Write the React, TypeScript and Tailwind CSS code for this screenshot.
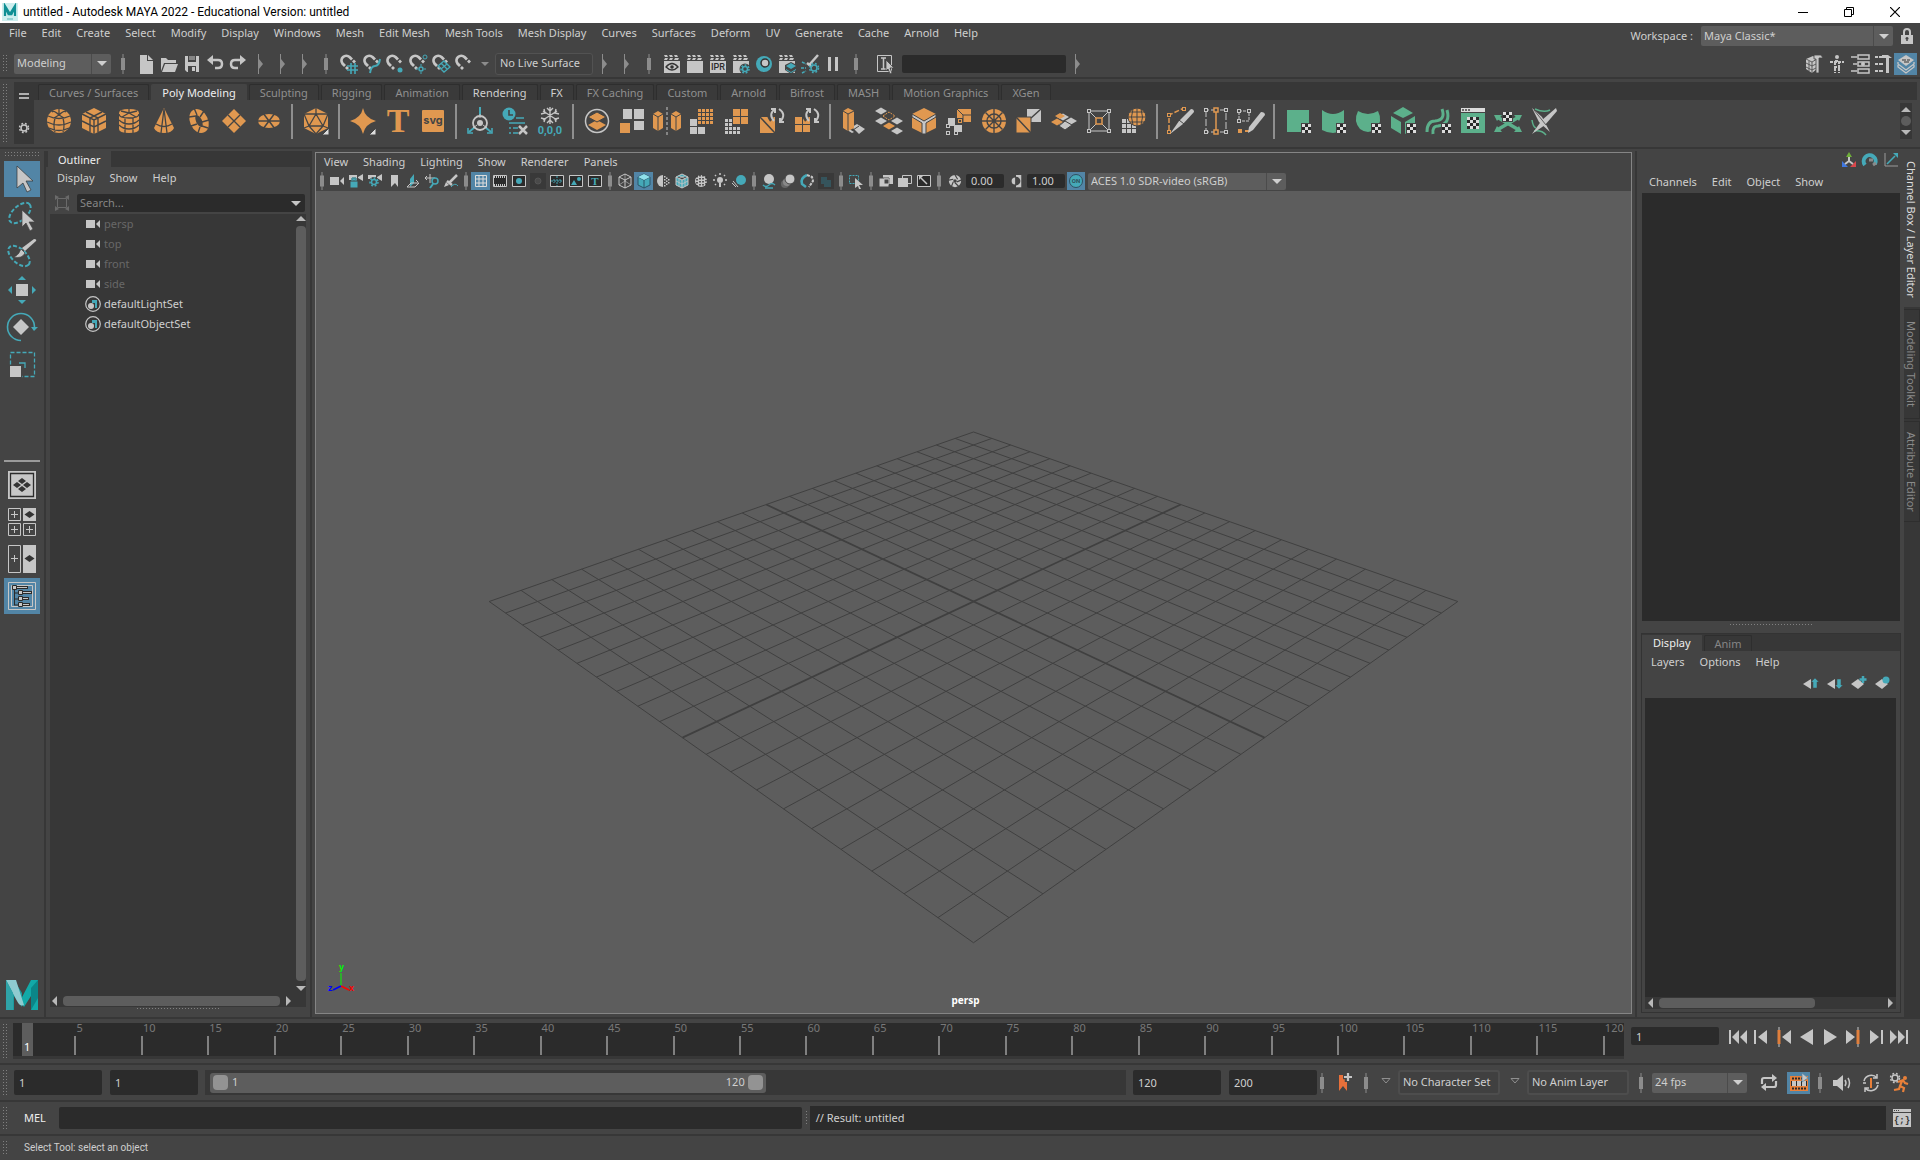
import { ReactNode } from 'react';
import clsx from 'clsx';

const G = '#c6c6c6';
const O = '#e09850';
const T = '#45a9b8';
const GR = '#5cb08b';
const D = '#444444';

const menus = [
  'File', 'Edit', 'Create', 'Select', 'Modify', 'Display', 'Windows', 'Mesh', 'Edit Mesh', 'Mesh Tools',
  'Mesh Display', 'Curves', 'Surfaces', 'Deform', 'UV', 'Generate', 'Cache', 'Arnold', 'Help',
];

const shelfTabs = [
  'Curves / Surfaces', 'Poly Modeling', 'Sculpting', 'Rigging', 'Animation', 'Rendering', 'FX', 'FX Caching',
  'Custom', 'Arnold', 'Bifrost', 'MASH', 'Motion Graphics', 'XGen',
];

/* ---------- shared drawing pieces ---------- */

const Checker = ({ x, y, s = 3 }: { x: number; y: number; s?: number }) => (
  <g>
    <rect x={x - 1} y={y - 1} width={s * 3 + 2} height={s * 3 + 2} fill={D} />
    <rect x={x} y={y} width={s * 3} height={s * 3} fill="#dcdcdc" />
    {[[1, 0], [0, 1], [2, 1], [1, 2]].map(([i, j]) => (
      <rect key={`${i}${j}`} x={x + i * s} y={y + j * s} width={s} height={s} fill="#2b2b2b" />
    ))}
  </g>
);

const Cells = ({ x, y, n, s, fill }: { x: number; y: number; n: number; s: number; fill: string }) => (
  <g fill={fill}>
    {Array.from({ length: n * n }, (_, k) => (
      <rect key={k} x={x + (k % n) * (s + 1)} y={y + Math.floor(k / n) * (s + 1)} width={s} height={s} />
    ))}
  </g>
);

const Clapper = ({ children }: { children?: ReactNode }) => (
  <>
    <path d="M2 1h3l1 2H3zM7 1h3l1 2H8zM12 1h3l1 2h-3zM3 4h3L5 6H2zM8 4h3l-1 2H7zM13 4h4l-1 2h-4z" fill={G} />
    <path d="M2 7h16v12H2z" fill={G} />
    {children}
  </>
);

const Magnet = ({ children }: { children?: ReactNode }) => (
  <>
    <path d="M6 12L3.500 9.500A4.800 4.800 0 0 1 10.500 3L13 5.500" fill="none" stroke={G} strokeWidth="2.800" />
    <path d="M7 13l2 2M14 6.500l2 2" stroke={G} strokeWidth="2.800" />
    {children}
  </>
);

const Diamond = ({ x, y, fill, r = 6 }: { x: number; y: number; fill: string; r?: number }) => (
  <path d={`M${x - r} ${y}l${r} ${-r * 0.6}l${r} ${r * 0.6}l${-r} ${r * 0.6}z`} fill={fill} />
);

const Node = ({ x, y, c = G }: { x: number; y: number; c?: string }) => (
  <rect x={x - 1.5} y={y - 1.5} width="3" height="3" fill={D} stroke={c} />
);

const gear = (x: number, y: number, c: string, r = 3) => (
  <g fill="none" stroke={c}>
    <circle cx={x} cy={y} r={r} strokeWidth="1.5" />
    <circle cx={x} cy={y} r={r + 1.5} strokeWidth="1.5" strokeDasharray="1.8 1.8" />
  </g>
);

/* ---------- shelf icons, 30 x 30 ---------- */

const shelfGroups: { name: string; art: ReactNode; more?: boolean }[][] = [
  [
    {
      name: 'Polygon Sphere',
      art: (
        <>
          <circle cx="15" cy="15" r="12" fill={O} />
          <path d="M15 3v7M4 10q11 5 22 0M3 16q12 6 24 0M5 22q10 5 20 0M11 12q-2 8 0 14M19 12q2 8 0 14M15 9Q10 4 8 6M15 9q5-5 7-3M15 9l-5 3M15 9l5 3" fill="none" stroke={D} strokeWidth="1.3" />
        </>
      ),
    },
    {
      name: 'Polygon Cube',
      art: (
        <>
          <path d="M15 2l12 6v14l-12 6-12-6V8z" fill={O} />
          <path d="M3 8l12 6 12-6M15 14v14M7 6l12 6v14M23 6L11 12v14M3 15l12 6 12-6" fill="none" stroke={D} strokeWidth="1.4" />
        </>
      ),
    },
    {
      name: 'Polygon Cylinder',
      art: (
        <>
          <path d="M5 7q0-4 10-4t10 4v16q0 4-10 4T5 23z" fill={O} />
          <path d="M5 8q0 4 10 4t10-4M15 3v4M15 7L7 5M15 7l8-2M15 7l-7 4M15 7l7 4M5 14q4 4 10 4t10-4M5 19q4 4 10 4t10-4M11 12v15M19 12v15" fill="none" stroke={D} strokeWidth="1.3" />
        </>
      ),
    },
    {
      name: 'Polygon Cone',
      art: (
        <>
          <path d="M15 2l10 20q-2 5-10 5t-10-5z" fill={O} />
          <path d="M15 3l-3 24M15 3l3 24M7 18q8 5 16 0" fill="none" stroke={D} strokeWidth="1.3" />
        </>
      ),
    },
    {
      name: 'Polygon Torus',
      art: (
        <>
          <ellipse cx="15" cy="15" rx="6" ry="9.500" transform="rotate(-25 15 15)" fill="none" stroke={O} strokeWidth="6" />
          <path d="M5 11l7-1M10 2l3 7M20 5l-4 6M25 14l-7 2M24 22l-6-2M14 27l2-6M7 20l6-2" fill="none" stroke={D} strokeWidth="1.4" />
        </>
      ),
    },
    {
      name: 'Polygon Plane',
      art: (
        <>
          <path d="M15 3l12 12-12 12L3 15z" fill={O} />
          <path d="M9 9l12 12M21 9L9 21" stroke={D} strokeWidth="1.4" />
        </>
      ),
    },
    {
      name: 'Polygon Disc',
      art: (
        <>
          <ellipse cx="15" cy="15" rx="11" ry="7" fill={O} />
          <path d="M4 15h22M9 7l12 16M21 7L9 23" stroke={D} strokeWidth="1.5" />
        </>
      ),
    },
  ],
  [
    {
      name: 'Platonic Solid',
      more: true,
      art: (
        <>
          <path d="M15 2l12 6v14l-12 6-12-6V8z" fill={O} />
          <path d="M15 8l7 12H8zM15 2v6M3 8l12 0M27 8H15M3 8l5 12M27 8l-5 12M8 20l-5 2M22 20l5 2M8 20l7 8 7-8" fill="none" stroke={D} strokeWidth="1.3" />
        </>
      ),
    },
  ],
  [
    { name: 'Super Shapes', more: true, art: <path d="M15 2q2 10 13 13-11 3-13 13-2-10-13-13Q13 12 15 2z" fill={O} /> },
    {
      name: 'Type',
      art: (
        <text x="15" y="26" textAnchor="middle" fontFamily="Liberation Serif, serif" fontWeight="700" fontSize="34" fill={O}>
          T
        </text>
      ),
    },
    {
      name: 'SVG',
      art: (
        <>
          <rect x="4" y="4" width="22" height="22" rx="1" fill={O} />
          <text x="15" y="18" textAnchor="middle" fontFamily="Inter, sans-serif" fontWeight="700" fontSize="11" fill={D}>
            svg
          </text>
        </>
      ),
    },
  ],
  [
    {
      name: 'Center Pivot',
      art: (
        <g fill="none">
          <path d="M15 1v8M4 26l6-5M26 26l-6-5" stroke={T} strokeWidth="2" />
          <path d="M3 22v5h5M27 22v5h-5" stroke={T} strokeWidth="1.600" />
          <circle cx="15" cy="17" r="7" stroke={G} strokeWidth="1.800" />
          <circle cx="15" cy="17" r="3" fill={G} />
          <path d="M15 8v4M8 22l4-3M22 22l-4-3" stroke={G} />
        </g>
      ),
    },
    {
      name: 'Delete History',
      art: (
        <g fill="none">
          <circle cx="9" cy="8" r="6.500" fill={T} />
          <path d="M9 4v5h4" stroke={D} strokeWidth="1.600" />
          <path d="M16 12h8M9 17h16M9 22h2M13 22h5M9 27h2M13 27h5" stroke={T} strokeWidth="1.600" />
          <path d="M19 20l8 8M27 20l-8 8" stroke={G} strokeWidth="2.500" />
        </g>
      ),
    },
    {
      name: 'Freeze Transformations',
      art: (
        <>
          <path d="M15 1v17M8 5l14 9M22 5L8 14M12 2l3 3 3-3M12 17l3-3 3 3M6 8l4-1-1-4M24 8l-4-1 1-4M6 12l4 1-1 3M24 12l-4 1 1 3" fill="none" stroke={G} strokeWidth="1.400" />
          <text x="15" y="28" textAnchor="middle" fontFamily="Roboto, sans-serif" fontWeight="700" fontSize="11" fill={T}>
            0,0,0
          </text>
        </>
      ),
    },
  ],
  [
    {
      name: 'Combine',
      art: (
        <>
          <circle cx="15" cy="15" r="11.500" fill="none" stroke={G} strokeWidth="1.500" />
          <path d="M15 14l9 5-9 5-9-5z" fill={O} />
          <path d="M15 6l9 5-9 5-9-5z" fill={O} stroke={D} />
        </>
      ),
    },
    {
      name: 'Separate',
      art: (
        <>
          <path d="M6 3h9v10H6zM17 3h10v10H17zM17 15h10v9H17z" fill={G} />
          <path d="M3 17h10v10H3z" fill={O} />
        </>
      ),
    },
    {
      name: 'Mirror',
      art: (
        <>
          <path d="M6 5l5 3v14l-5 3-5-3V8zM24 5l5 3v14l-5 3-5-3V8z" fill={O} />
          <path d="M1 8l5 3 5-3M6 11v14M19 8l5 3 5-3M24 11v14" fill="none" stroke={D} />
          <path d="M15 1v28" stroke={G} strokeDasharray="3 2" />
        </>
      ),
    },
    {
      name: 'Smooth',
      art: (
        <>
          <Cells x={3} y={13} n={2} s={7} fill={G} />
          <rect x="10" y="2" width="18" height="18" fill={D} />
          <Cells x={11} y={3} n={4} s={3} fill={O} />
        </>
      ),
    },
    {
      name: 'Reduce',
      art: (
        <>
          <Cells x={3} y={13} n={4} s={3} fill={G} />
          <rect x="10" y="2" width="18" height="18" fill={D} />
          <Cells x={11} y={3} n={2} s={7} fill={O} />
        </>
      ),
    },
    {
      name: 'Triangulate',
      art: (
        <>
          <path d="M3 11h15v16H3z" fill={O} />
          <path d="M3 11l15 16" stroke={D} strokeWidth="1.500" />
          <path d="M15 14Q9 7 17 3M22 3q9 4 2 14" fill="none" stroke={D} strokeWidth="5" />
          <path d="M17 15Q11 8 18 3M14 3h4v4M22 3q8 5 1 13M27 16h-4v-4" fill="none" stroke={G} strokeWidth="2" />
        </>
      ),
    },
    {
      name: 'Quadrangulate',
      art: (
        <>
          <Cells x={3} y={11} n={2} s={7} fill={O} />
          <path d="M15 14Q9 7 17 3M22 3q9 4 2 14" fill="none" stroke={D} strokeWidth="5" />
          <path d="M17 15Q11 8 18 3M14 3h4v4M22 3q8 5 1 13M27 16h-4v-4" fill="none" stroke={G} strokeWidth="2" />
        </>
      ),
    },
  ],
  [
    {
      name: 'Extrude',
      art: (
        <>
          <path d="M13 21l5-3 8 5-6 5z" fill={G} />
          <path d="M19 17l6 4M14 24l6-4M7 22l9 6" stroke={D} />
          <path d="M5 22l8 5 2-1-8-5z" fill={G} />
          <path d="M9 2l6 3v17l-6 3-5-3V5z" fill={O} />
          <path d="M4 5l5 3 6-3M9 8v17" fill="none" stroke={D} />
        </>
      ),
    },
    {
      name: 'Bridge',
      art: (
        <>
          <Diamond x={7} y={5} fill={G} />
          <path d="M9 10l6-4 6 4-6 4z" fill="none" stroke={O} strokeDasharray="2 1" />
          <Diamond x={7} y={15} fill={G} />
          <Diamond x={23} y={15} fill={G} />
          <Diamond x={15} y={20} fill={O} />
          <Diamond x={23} y={25} fill={G} />
        </>
      ),
    },
    {
      name: 'Bevel',
      art: (
        <>
          <path d="M15 2l12 6v14l-12 6-12-6V8z" fill={O} />
          <path d="M3 8l12 7 12-7v3l-10 6v11h-4V17L3 11z" fill={G} stroke={D} />
        </>
      ),
    },
    {
      name: 'Merge',
      art: (
        <>
          <path d="M13 3h14v13h-8v-4h-6z" fill={O} />
          <path d="M13 3l6 6v7M27 9h-8" fill="none" stroke={D} />
          <path d="M4 12h7v7h7v7h-8v-6H4z" fill={G} />
          <Node x={16} y={15} c={O} />
          <Node x={4} y={20} />
          <Node x={4} y={27} />
          <Node x={12} y={27} />
        </>
      ),
    },
    {
      name: 'Circularize',
      art: (
        <>
          <circle cx="15" cy="15" r="12" fill={O} />
          <path d="M15 3v24M3 15h24M6.500 6.500l17 17M23.500 6.500l-17 17" stroke={D} strokeWidth="1.400" />
          <circle cx="15" cy="15" r="7" fill="none" stroke={D} strokeWidth="1.400" />
        </>
      ),
    },
    {
      name: 'Collapse',
      art: (
        <>
          <path d="M13 3h14v13H13z" fill={G} />
          <path d="M2 11h15v16H2z" fill={O} stroke={D} />
          <path d="M2 11l15 16M17 12l10-9" stroke={D} strokeWidth="1.500" />
        </>
      ),
    },
    {
      name: 'Target Weld',
      art: (
        <>
          <Diamond x={22} y={15} fill={G} />
          <Diamond x={16} y={19} fill={G} />
          <Diamond x={14} y={11} fill={G} />
          <Diamond x={8} y={16} fill={O} />
          <Diamond x={11} y={10} fill={O} r={5} />
          <path d="M16 15l7 4-7 5-6-4z" fill={G} stroke={D} />
        </>
      ),
    },
    {
      name: 'Lattice',
      art: (
        <>
          <path d="M5 5h20v20H5zM5 5l20 20M25 5L5 25" fill="none" stroke={G} />
          <Node x={5} y={5} />
          <Node x={25} y={5} />
          <Node x={5} y={25} />
          <Node x={25} y={25} />
          <rect x="12" y="12" width="6" height="6" fill={D} stroke={O} strokeWidth="1.500" />
        </>
      ),
    },
    {
      name: 'Shrinkwrap',
      art: (
        <>
          <Cells x={3} y={13} n={3} s={4} fill={G} />
          <circle cx="18" cy="11" r="9" fill={O} stroke={D} />
          <path d="M18 2v18M9 11h18M11 6h14M11 16h14M14 3q-3 8 0 16M22 3q3 8 0 16" fill="none" stroke={D} />
        </>
      ),
    },
  ],
  [
    {
      name: 'Multi-Cut',
      art: (
        <>
          <path d="M3 24V9l15-7" fill="none" stroke={O} strokeWidth="1.500" strokeDasharray="5 2" />
          <Node x={3} y={9} c={O} />
          <Node x={18} y={3} c={O} />
          <Node x={3} y={26} c={O} />
          <path d="M4 28l9-13 12-12q3 0 3 3L17 18z" fill={G} />
          <path d="M13 14l5 4" stroke={D} />
        </>
      ),
    },
    {
      name: 'Insert Edge Loop',
      art: (
        <>
          <path d="M5 4v22h20V4z" fill="none" stroke={G} strokeDasharray="7 2" />
          <path d="M15 5v20" stroke={O} strokeWidth="1.500" />
          <rect x="13" y="2" width="4" height="4" fill={D} stroke={O} strokeWidth="1.500" />
          <rect x="13" y="24" width="4" height="4" fill={D} stroke={O} strokeWidth="1.500" />
          <Node x={5} y={4} />
          <Node x={25} y={4} />
          <Node x={5} y={26} />
          <Node x={25} y={26} />
        </>
      ),
    },
    {
      name: 'Quad Draw',
      art: (
        <>
          <path d="M3 5h10v10H3z" fill="none" stroke={G} strokeDasharray="3 1" />
          <Node x={3} y={5} />
          <Node x={13} y={5} />
          <Node x={3} y={15} />
          <rect x="2" y="23" width="4" height="4" fill={O} />
          <path d="M9 25h5" stroke={O} strokeWidth="2" />
          <path d="M12 27l1-6L25 6q4 0 4 3L17 24z" fill={G} />
        </>
      ),
    },
  ],
  [
    {
      name: 'Planar Mapping',
      art: (
        <>
          <path d="M4 4h22v22H4z" fill={GR} />
          <Checker x={19} y={18} />
        </>
      ),
    },
    {
      name: 'Cylindrical Mapping',
      art: (
        <>
          <path d="M4 4q11 8 22 0v20q-11 6-22 0z" fill={GR} />
          <Checker x={19} y={18} />
        </>
      ),
    },
    {
      name: 'Spherical Mapping',
      art: (
        <>
          <path d="M5 5q10 6 20 0 5 10-2 18-8 6-16 0Q0 15 5 5z" fill={GR} />
          <Checker x={19} y={18} />
        </>
      ),
    },
    {
      name: 'Automatic Mapping',
      art: (
        <>
          <path d="M15 1l10 6-10 5L5 7zM3 10l10 6v12L3 22zM27 10l-10 6v12l10-6z" fill={GR} />
          <Checker x={19} y={18} />
        </>
      ),
    },
    {
      name: 'Contour Stretch',
      art: (
        <>
          <path d="M4 26q0-11 8-11 11-1 7-12" fill="none" stroke={GR} strokeWidth="3" />
          <path d="M10 28q-1-8 5-8 13-2 9-16" fill="none" stroke={GR} strokeWidth="3" />
          <Checker x={19} y={18} />
        </>
      ),
    },
    {
      name: 'UV Editor',
      art: (
        <>
          <path d="M3 2h24v4H3z" fill="#dcdcdc" />
          <path d="M4 4h2M7 4h2M10 4h2" stroke={D} strokeWidth="1.500" />
          <path d="M3 7h24v20H3z" fill={GR} />
          <rect x="9" y="11" width="12" height="12" fill="#dcdcdc" />
          <path d="M12 11h3v3h-3zM18 11h3v3h-3zM9 14h3v3H9zM15 14h3v3h-3zM12 17h3v3h-3zM18 17h3v3h-3zM9 20h3v3H9zM15 20h3v3h-3z" fill="#2b2b2b" />
        </>
      ),
    },
    {
      name: 'UV Unfold',
      art: (
        <>
          <path d="M4 11l22 13M26 11L4 24" stroke={GR} strokeWidth="3.500" />
          <path d="M1 9h8l-5 6zM29 9h-8l5 6zM1 26h8l-5-6zM29 26h-8l5-6z" fill={GR} />
          <Checker x={10} y={6} />
        </>
      ),
    },
    {
      name: 'Cut and Sew UVs',
      art: (
        <>
          <path d="M7 3q9 4 15 1M4 14q1 7 4 8M6 25q8-1 12 4" fill="none" stroke={GR} strokeWidth="1.500" />
          <path d="M4 2l10 9 8 15-11-10z" fill={G} />
          <path d="M28 2L14 14 4 28l13-9L29 5z" fill={G} />
          <path d="M6 4l12 15" stroke={D} strokeWidth="0.800" />
        </>
      ),
    },
  ],
];

/* ---------- status line icons, 20 x 20 ---------- */

type Icon = { name: string; art: ReactNode; on?: boolean };

const fileIcons: Icon[] = [
  { name: 'New Scene', art: <><path d="M4 1h7v6h6v13H4z" fill={G} /><path d="M12 1l5 5h-5z" fill={G} /></> },
  {
    name: 'Open Scene',
    art: <><path d="M2 4h5l2 2h8v3H5l-3 8z" fill={G} /><path d="M6 10h13l-3 8H3z" fill={G} /></>,
  },
  {
    name: 'Save Scene',
    art: (
      <>
        <path d="M3 2h14v16H5l-2-2z" fill={G} />
        <path d="M6 2h8v6H6zM6 12h8v6H6z" fill={D} />
        <path d="M7 3h6M7 5h6" stroke={G} />
        <path d="M10 13h3v4h-3z" fill={G} />
      </>
    ),
  },
  { name: 'Undo', art: <><path d="M6 6h7q4 0 4 4t-4 4h-3" fill="none" stroke={G} strokeWidth="2.500" /><path d="M2 6l6-5v10z" fill={G} /></> },
  { name: 'Redo', art: <><path d="M14 6H7q-4 0-4 4t4 4h3" fill="none" stroke={G} strokeWidth="2.500" /><path d="M18 6l-6-5v10z" fill={G} /></> },
];

const snapIcons: Icon[] = [
  { name: 'Snap to grids', art: <Magnet><path d="M12 9v11M16 9v11M8 12h11M8 16h11" stroke={T} strokeWidth="1.600" /></Magnet> },
  { name: 'Snap to curves', art: <Magnet><path d="M8 19q1-7 5-7t5-7" fill="none" stroke={T} strokeWidth="2" /></Magnet> },
  { name: 'Snap to points', art: <Magnet><circle cx="15" cy="16" r="2.500" fill={T} /></Magnet> },
  {
    name: 'Snap to projected center',
    art: <Magnet><circle cx="17" cy="3" r="2" fill="none" stroke={T} /><circle cx="13" cy="15" r="2" fill="none" stroke={T} strokeWidth="1.500" /><path d="M13 10v2M13 18v2M8 15h2M16 15h2" stroke={T} /></Magnet>,
  },
  { name: 'Snap to view planes', art: <Magnet><path d="M7 12l6-5 6 6-6 5zM10 9l6 6M16 10l-6 5" fill="none" stroke={T} strokeWidth="1.300" /></Magnet> },
  { name: 'Make live', art: <Magnet /> },
];

const renderIcons: Icon[] = [
  {
    name: 'Open Render View',
    art: <Clapper><path d="M4 13q6-7 12 0-6 6-12 0z" fill="none" stroke="#333" strokeWidth="1.300" /><circle cx="10" cy="13" r="1.800" fill="#333" /></Clapper>,
  },
  { name: 'Render current frame', art: <Clapper /> },
  {
    name: 'IPR render',
    art: (
      <Clapper>
        <text x="10" y="16" textAnchor="middle" fontFamily="Roboto, sans-serif" fontWeight="500" fontSize="9" fill="#2b2b2b">
          IPR
        </text>
      </Clapper>
    ),
  },
  { name: 'Render settings', art: <Clapper><circle cx="14" cy="15" r="5.500" fill={D} />{gear(14, 15, T, 2.5)}</Clapper> },
  { name: 'Hypershade', art: <><circle cx="10" cy="10" r="8" fill={T} /><circle cx="11" cy="9" r="4" fill={G} stroke="#333" strokeWidth="1.500" /></> },
  {
    name: 'Render setup',
    art: <Clapper><path d="M14 8l6 3v5l-6 4-6-4v-5z" fill={D} /><path d="M14 9l5 3-5 3-5-3zM9 15l5 3 5-3v1l-5 3-5-3z" fill={T} /></Clapper>,
  },
  {
    name: 'Light editor',
    art: <><path d="M18 1l-8 9M7 9l5 4" stroke={G} strokeWidth="2.500" /><path d="M2 8l4 2M1 14h5M2 19l4-2" stroke={T} strokeWidth="1.500" strokeDasharray="3 1" />{gear(14, 14, T, 3)}</>,
  },
  { name: 'Pause viewport', art: <path d="M5 3h3v14H5zM12 3h3v14h-3z" fill={G} /> },
];

const sidebarIcons: Icon[] = [
  {
    name: 'Modeling Toolkit',
    art: <><path d="M2 5l7-3 4 2v11l-5 4-6-4z" fill={G} /><path d="M2 5l6 3v11M5 7v10M2 9l6 3M2 13l6 3M8 8l5-3M8 12l4-2M8 16l4-2" fill="none" stroke={D} strokeWidth="0.800" /><path d="M10 1h7l2 3h-4v15h-3V5h-2z" fill={G} stroke={D} strokeWidth="0.800" /></>,
  },
  {
    name: 'Character Controls',
    art: <><circle cx="10" cy="3" r="2" fill={G} /><path d="M3 8h14M8 7h4v6H8zM8 14v5M12 14v5" fill="none" stroke={G} strokeWidth="2" strokeDasharray="3 1" /></>,
  },
  {
    name: 'Attribute Editor',
    art: <><path d="M1 3h6M3 10h4M1 17h6" stroke={G} strokeWidth="1.500" /><path d="M8 1h11v4H8zM8 8h11v4H8zM8 15h11v4H8z" fill="none" stroke={G} strokeWidth="1.500" /><circle cx="13" cy="10" r="2" fill={G} /></>,
  },
  {
    name: 'Tool Settings',
    art: <><path d="M2 3h3M6 3h3M2 10h3M6 10h4M2 17h3M6 17h4" stroke={G} strokeWidth="2" /><path d="M9 1h6l4 3h-3v15h-3V4H9z" fill={G} /></>,
  },
  {
    name: 'Channel Box',
    on: true,
    art: <><path d="M2 11v2l8 6 8-6v-2M2 8v2l8 6 8-6V8" fill="none" stroke={G} strokeWidth="1.300" /><path d="M10 1l8 5-8 6-8-6z" fill={G} /><path d="M6 6h4M11 6h3M8 8h5" stroke="#333" /></>,
  },
];

/* ---------- viewport panel icons, 16 x 16 ---------- */

const Cam = ({ c = G }: { c?: string }) => <path d="M1 4h9v8H1zM11 8l4-4v8z" fill={c} />;
const Box = ({ children, c = G }: { children?: ReactNode; c?: string }) => (
  <>
    <path d="M1.500 2.500h13v11h-13z" fill="#2b2b2b" stroke={c} />
    {children}
  </>
);
const Hex = ({ fill, stroke }: { fill: string; stroke: string }) => (
  <path d="M8 1l6 3v8l-6 3-6-3V4zM2 4l6 3 6-3M8 7v8" fill={fill} stroke={stroke} />
);
const halfDots = [[9, 3], [9, 6], [9, 9], [9, 12], [11, 4.5], [11, 7.5], [11, 10.5], [13, 6], [13, 9]];

const panelGroups: Icon[][] = [
  [
    { name: 'Select camera', art: <Cam /> },
    { name: 'Lock camera', art: <><path d="M1 2h8v5H1zM10 4l5-3v7l-5-3z" fill={G} /><path d="M2 8h8v7H2zM4 8V5h4v3" fill={T} stroke={D} /><path d="M4 8V5h4v3" fill="none" stroke={T} /></> },
    { name: 'Camera attributes', art: <><path d="M1 2h8v4H1zM10 4l5-3v7l-5-3z" fill={G} /><circle cx="7" cy="9" r="5" fill={D} />{gear(7, 9, T, 2.5)}</> },
    { name: 'Bookmarks', art: <path d="M5 2h7v12l-3-4-4 4z" fill={G} /> },
    { name: 'Image plane', art: <><path d="M9 1v9l-4 4V6z" fill={T} /><path d="M2 14l4-4h8l-4 4zM11 7l2 2" fill="none" stroke={G} /></> },
    { name: '2D pan/zoom', art: <><path d="M1 5h10M6 1v9M3 3L1 5l2 2" fill="none" stroke={G} /><circle cx="11" cy="8" r="3" fill={D} stroke={T} strokeWidth="1.500" /><path d="M9 11l-3 4" stroke={T} strokeWidth="2" /></> },
    { name: 'Blue pencil', art: <><path d="M14 2L6 10M9 12L4 8" stroke={G} strokeWidth="2.500" /><path d="M1 14l2-5 3 3z" fill={G} /><path d="M8 14q4-5 7-1" fill="none" stroke={T} /></> },
  ],
  [
    { name: 'Grid', on: true, art: <path d="M2.500 2.500h11v11h-11zM6 2v12M10 2v12M2 6h12M2 10h12" fill="none" stroke="#dcdcdc" /> },
    { name: 'Film gate', art: <Box><path d="M2 4h12M2 12h12" stroke={G} strokeWidth="2" strokeDasharray="1 1" /></Box> },
    { name: 'Resolution gate', art: <Box><circle cx="8" cy="8" r="3" fill={T} /></Box> },
    { name: 'Gate mask', art: <><path d="M0 0h16v16H0z" fill="#393939" /><circle cx="8" cy="8" r="3" fill="#4a4a4a" stroke="#555" /></> },
    { name: 'Field chart', art: <Box><path d="M8 3v10M2 8h12M5 6v4M11 6v4" stroke={T} strokeDasharray="2 1" /></Box> },
    { name: 'Safe action', art: <Box><path d="M3 12l3-5 3 5z" fill={T} /><circle cx="11" cy="6" r="2" fill={T} /></Box> },
    {
      name: 'Safe title',
      art: (
        <Box>
          <text x="8" y="12" textAnchor="middle" fontFamily="Liberation Serif, serif" fontWeight="700" fontSize="11" fill={T}>T</text>
        </Box>
      ),
    },
  ],
  [
    { name: 'Wireframe', art: <><Hex fill="none" stroke={G} /><path d="M8 1v7M2 12l6-4 6 4" stroke={G} strokeWidth="0.600" fill="none" /></> },
    { name: 'Smooth shade all', on: true, art: <><Hex fill={T} stroke="#2b5468" /><path d="M8 1l6 3-6 3-6-3z" fill="#8fe0ea" /></> },
    { name: 'Default material', art: <><path d="M8 2a6 6 0 0 0 0 12z" fill={G} />{halfDots.map(([x, y]) => <rect key={`${x}-${y}`} x={x} y={y} width="1.500" height="1.500" fill={G} />)}</> },
    { name: 'Wireframe on shaded', art: <><Hex fill={T} stroke={G} /><path d="M5 2.500l6 3M11 2.500l-6 3M2 8l6 3 6-3M5 6v7M11 6v7" fill="none" stroke={G} strokeWidth="0.800" /></> },
    { name: 'Textured', art: <><circle cx="8" cy="8" r="6" fill={G} /><path d="M4 3v10M7 2v12M10 2v12M13 4v9" stroke="#333" strokeWidth="1.500" strokeDasharray="1.500 1.500" /></> },
    { name: 'Use all lights', art: <><circle cx="8" cy="7" r="3" fill={G} /><path d="M7 10h2v4H7z" fill={G} /><path d="M1 7h2M13 7h2M3 2l1 1M13 2l-1 1M8 0v2M3 12l1-1M13 12l-1-1" stroke={G} strokeWidth="1.500" /></> },
    { name: 'Shadows', art: <><circle cx="10" cy="7" r="5" fill={T} /><path d="M1 10l4 4M2 8l5 6" stroke={G} /></> },
  ],
  [
    { name: 'Ambient occlusion', art: <><circle cx="8" cy="6" r="5" fill={G} /><path d="M2 12q3 3 6 0t6 0M4 15h8" fill="none" stroke={T} strokeWidth="1.300" /></> },
    { name: 'Motion blur', art: <><circle cx="5" cy="11" r="4" fill="#666" /><circle cx="7" cy="9" r="4" fill="#888" /><circle cx="10" cy="6" r="5" fill={G} stroke={D} /></> },
    { name: 'Anti-aliasing', art: <><path d="M8 2Q1 5 3 11l4 3" fill="none" stroke={T} strokeWidth="2.500" /><path d="M8 2l5 2 1 4-4 6" fill="none" stroke={G} strokeWidth="2" strokeDasharray="3 1" /></> },
    { name: 'Depth of field', art: <><path d="M0 0h16v16H0z" fill="#393939" /><path d="M3 4h6v7H3zM6 7h7v7H6z" fill="#35545c" /></> },
  ],
  [{ name: 'Isolate select', art: <><path d="M1.500 2.500h9v8h-9z" fill="none" stroke={T} strokeDasharray="2 1" /><path d="M7 5l8 7h-4l2 4h-2l-1-3-3 2z" fill={G} /></> }],
  [
    { name: 'X-ray', art: <><path d="M5 2h10v9H5z" fill={G} /><path d="M1 5h10v9H1z" fill={G} stroke={D} /><path d="M6 6h5v5H6z" fill={D} stroke={G} /></> },
    { name: 'X-ray active', art: <><path d="M5.500 2.500h9v8h-9z" fill={D} stroke={G} /><path d="M1 5h10v9H1z" fill={G} /></> },
    { name: 'X-ray joints', art: <Box><path d="M5 5l6 6" stroke={G} strokeWidth="1.500" /><path d="M3 3h4l-4 4z" fill={G} /></Box> },
  ],
];

/* ---------- controls ---------- */

const Svg = ({ box, children, className }: { box: number; children: ReactNode; className: string }) => (
  <svg viewBox={`0 0 ${box} ${box}`} className={clsx('shrink-0 overflow-visible', className)} aria-hidden="true">
    {children}
  </svg>
);

const Grip = () => (
  <div className="my-1 ml-[2px] w-[6px] shrink-0 bg-[radial-gradient(#808080_30%,transparent_40%)] bg-size-[3px_3px]" />
);

const Sep = ({ className }: { className: string }) => (
  <div className={clsx('flex shrink-0 items-center justify-center', className)}>
    <svg viewBox="0 0 4 20" preserveAspectRatio="none" className="h-full w-1">
      <path d="M1.500 0h1v4H4v12H2.500v4h-1v-4H0V4h1.500z" fill="#8c8c8c" />
    </svg>
  </div>
);

const Collapse = () => (
  <button aria-label="Expand section" className="flex h-5 w-[22px] shrink-0 items-center justify-center">
    <svg viewBox="0 0 5 20" className="h-5 w-[5px]">
      <path d="M0 0h1v5l4 5-4 5v5H0z" fill="#8c8c8c" />
    </svg>
  </button>
);

const IconButton = ({ icon }: { icon: Icon }) => (
  <button aria-label={icon.name} className={clsx('flex h-[22px] w-[23px] shrink-0 items-center justify-center', icon.on && 'bg-[#5285a6]')}>
    <Svg box={20} className="size-5">{icon.art}</Svg>
  </button>
);

const Combo = ({ label, value, className }: { label: string; value: string; className: string }) => (
  <div className={clsx('relative shrink-0', className)}>
    <select aria-label={label} className="h-full w-full appearance-none rounded-[2px] bg-[#5d5d5d] pr-5 pl-[3px] text-[11px] text-[#cfcfcf] outline-none">
      <option>{value}</option>
    </select>
    <div className="pointer-events-none absolute inset-y-0 right-0 flex w-5 items-center justify-center border-l border-[#4b4b4b]">
      <svg viewBox="0 0 10 5" className="h-[5px] w-[10px]"><path d="M0 0h10L5 5z" fill="#cfcfcf" /></svg>
    </div>
  </div>
);

const Field = ({ label, value, className }: { label: string; value?: string; className: string }) => (
  <input
    aria-label={label}
    defaultValue={value}
    className={clsx('min-w-0 rounded-[2px] bg-[#2b2b2b] px-[5px] text-[11px] text-[#cfcfcf] outline-none', className)}
  />
);

const MenuBar = ({ items, className }: { items: string[]; className: string }) => (
  <nav className={clsx('flex items-center', className)}>
    {items.map((item) => (
      <button key={item} className="leading-4 whitespace-nowrap">{item}</button>
    ))}
  </nav>
);

const Arrow = ({ dir }: { dir: 'up' | 'down' | 'left' | 'right' }) => {
  const d = { up: 'M0 7l5-5 5 5z', down: 'M0 3l5 5 5-5z', left: 'M7 0L2 5l5 5z', right: 'M3 0l5 5-5 5z' }[dir];
  return (
    <button aria-label={`Scroll ${dir}`} className="size-[10px] shrink-0">
      <svg viewBox="0 0 10 10" className="size-[10px]"><path d={d} fill="#b8b8b8" /></svg>
    </button>
  );
};

const DotHandle = () => (
  <div className="h-[3px] w-[85px] bg-[radial-gradient(#808080_30%,transparent_40%)] bg-size-[3px_3px]" />
);

/* ---------- sections ---------- */

const TitleBar = () => (
  <header className="flex h-[23px] shrink-0 items-center bg-white pr-[2px] pl-[2px] text-black">
    <svg viewBox="0 0 16 18" className="h-[18px] w-4">
      <rect width="16" height="18" fill="#cdeeee" />
      <path d="M3 13V3l5 8 5-8v10M3 4l4 8M13 4l-4 8" fill="none" stroke="#0f8f94" strokeWidth="2.200" />
      <path d="M5 16h6" stroke="#5fb7ba" />
    </svg>
    <h1 className="ml-[5px] flex-1 font-['Roboto',sans-serif] text-[12px] leading-4">untitled - Autodesk MAYA 2022 - Educational Version: untitled</h1>
    <button aria-label="Minimize" className="flex h-full w-[46px] items-center justify-center">
      <svg viewBox="0 0 10 10" className="size-[10px]"><path d="M0 5.500h10" stroke="#000" /></svg>
    </button>
    <button aria-label="Restore" className="flex h-full w-[46px] items-center justify-center">
      <svg viewBox="0 0 10 10" className="size-[10px]"><path d="M.5 2.500h7v7h-7zM2.500 2V.5h7v7H8" fill="none" stroke="#000" /></svg>
    </button>
    <button aria-label="Close" className="flex h-full w-[46px] items-center justify-center">
      <svg viewBox="0 0 10 10" className="size-[10px]"><path d="M0 0l10 10M10 0L0 10" stroke="#000" strokeWidth="1.200" /></svg>
    </button>
  </header>
);

const MainMenu = () => (
  <div className="flex h-[27px] shrink-0 items-start justify-between pr-[7px] pl-[9px]">
    <MenuBar items={menus} className="gap-[15px] pt-[2px]" />
    <div className="flex items-center pt-[3px]">
      <span className="mr-2">Workspace :</span>
      <Combo label="Workspace" value="Maya Classic*" className="h-5 w-48" />
      <button aria-label="Lock workspace" className="ml-2 flex w-3 justify-center">
        <svg viewBox="0 0 12 16" className="h-4 w-3">
          <path d="M3 7V4q0-3 3-3t3 3v3" fill="none" stroke={G} strokeWidth="2" />
          <rect y="7" width="12" height="9" fill={G} />
          <path d="M6 9v4M4.500 10.500h3" stroke={D} strokeWidth="1.500" />
        </svg>
      </button>
    </div>
  </div>
);

const StatusLine = () => (
  <div className="flex h-[27px] shrink-0">
    <Grip />
    <div className="flex min-w-0 flex-1 items-center pr-[3px] pl-[6px]">
      <Combo label="Menu set" value="Modeling" className="h-5 w-[97px]" />
      <Sep className="h-5 w-[23px]" />
      {fileIcons.map((icon) => <IconButton key={icon.name} icon={icon} />)}
      <Collapse />
      <Collapse />
      <Collapse />
      <Sep className="h-5 w-[22px]" />
      {snapIcons.map((icon) => <IconButton key={icon.name} icon={icon} />)}
      <button aria-label="Snap options" className="flex h-5 w-5 shrink-0 items-center justify-center">
        <svg viewBox="0 0 8 4" className="h-1 w-2"><path d="M0 0h8L4 4z" fill="#8c8c8c" /></svg>
      </button>
      <button className="h-[22px] w-[98px] shrink-0 rounded-[3px] border border-[#525252] bg-[#404040] pl-[4px] text-left whitespace-nowrap">
        No Live Surface
      </button>
      <Collapse />
      <Collapse />
      <Sep className="h-5 w-[23px]" />
      {renderIcons.map((icon) => <IconButton key={icon.name} icon={icon} />)}
      <Sep className="h-5 w-[23px]" />
      <button aria-label="Input mode" className="flex h-5 w-[35px] shrink-0 items-center justify-center">
        <Svg box={20} className="size-5">
          <path d="M2.500 1.500h14v16h-14z" fill="none" stroke={G} />
          <path d="M6 4h5M6 15h5M8.500 4v11" stroke={G} strokeWidth="1.500" />
          <path d="M11 6l8 8h-4l2 5-2 1-2-5-2 2z" fill={G} stroke={D} strokeWidth="0.800" />
        </Svg>
      </button>
      <Field label="Select by name" className="h-[18px] w-[164px] shrink-0" />
      <Collapse />
      <div className="ml-auto flex">
        {sidebarIcons.map((icon) => <IconButton key={icon.name} icon={icon} />)}
      </div>
    </div>
  </div>
);

const Shelf = () => (
  <section className="flex h-[70px] shrink-0 border-t-2 border-[#373737]" aria-label="Shelf">
    <Grip />
    <div className="mt-[3px] mb-[3px] ml-[6px] flex w-5 shrink-0 flex-col items-center justify-between bg-[#373737] pt-[11px] pb-[10px]">
      <button aria-label="Shelf tabs menu" className="flex h-[6px] w-[10px] flex-col justify-between">
        <span className="h-[2px] w-full bg-[#b0b0b0]" />
        <span className="h-[2px] w-full bg-[#b0b0b0]" />
      </button>
      <button aria-label="Shelf settings">
        <Svg box={12} className="size-3">{gear(6, 6, G, 3)}</Svg>
      </button>
    </div>
    <div className="mt-[3px] mr-[3px] flex min-w-0 flex-1 flex-col">
      <div className="flex h-[18px] shrink-0 items-end gap-[2px] bg-[#373737] pl-1">
        {shelfTabs.map((tab) => (
          <button
            key={tab}
            className={clsx(
              'h-4 rounded-t-[2px] border border-b-0 px-[10px] leading-4 whitespace-nowrap',
              tab === 'Poly Modeling' ? 'border-[#444] bg-[#444] text-[#eeeeee]' : 'border-[#2e2e2e] bg-[#3a3a3a]',
              tab === 'Rendering' || tab === 'FX' ? 'text-[#cfcfcf]' : tab !== 'Poly Modeling' && 'text-[#8f8f8f]'
            )}
          >
            {tab}
          </button>
        ))}
      </div>
      <div className="flex flex-1 items-center pb-[5px] pl-[7px]">
        {shelfGroups.map((group, i) => (
          <div key={i} className="flex items-center">
            {i > 0 && <div className="mx-[5px] h-[35px] w-[2px] bg-[#8f8f8f]" />}
            {group.map((tool) => (
              <button key={tool.name} aria-label={tool.name} className="flex w-[35px] justify-center">
                <Svg box={30} className="size-[30px]">
                  {tool.art}
                  {tool.more && <path d="M28 22v7h-7z" fill="#dcdcdc" stroke={D} />}
                </Svg>
              </button>
            ))}
          </div>
        ))}
        <div className="mr-[5px] ml-auto flex h-9 w-3 flex-col items-center justify-between bg-[#373737] py-[2px]">
          <Arrow dir="up" />
          <span className="size-[10px] rounded-full bg-[#5d5d5d]" />
          <Arrow dir="down" />
        </div>
      </div>
    </div>
  </section>
);

const tools: Icon[] = [
  { name: 'Select Tool', on: true, art: <path d="M13 5l16 15h-7l5 9-4 2-4-9-6 5z" fill={G} stroke="#333" strokeWidth="0.700" /> },
  {
    name: 'Lasso Tool',
    art: <><ellipse cx="16" cy="15" rx="13" ry="7" transform="rotate(-42 16 15)" fill="none" stroke={T} strokeWidth="2" strokeDasharray="4 2" /><path d="M18 12l13 12h-6l4 7-3 2-4-8-4 4z" fill={G} stroke={D} strokeWidth="0.700" /></>,
  },
  {
    name: 'Paint Selection Tool',
    art: <><ellipse cx="15" cy="21" rx="13" ry="7" transform="rotate(42 15 21)" fill="none" stroke={T} strokeWidth="2" strokeDasharray="4 2" /><path d="M30 4q3 0 2 2L21 16l-3-3z" fill={G} /><path d="M17 14l4 4q-3 6-11 4 5-2 7-8z" fill={G} stroke={D} strokeWidth="0.700" /></>,
  },
  {
    name: 'Move Tool',
    art: <><path d="M12 12h12v12H12z" fill={G} /><path d="M18 4l4 4h-8zM18 32l4-4h-8zM4 18l4-4v8zM32 18l-4-4v8z" fill={T} /></>,
  },
  {
    name: 'Rotate Tool',
    art: <><path d="M17 10l8 8-8 8-8-8z" fill={G} /><path d="M17 31.500A13.500 13.500 0 1 1 30.500 18" fill="none" stroke={T} strokeWidth="1.600" /><path d="M27 18h7l-4 4z" fill={T} /></>,
  },
  {
    name: 'Scale Tool',
    art: <><path d="M6.500 6.500h24v24h-24z" fill="none" stroke={T} strokeWidth="1.300" strokeDasharray="4 2" /><path d="M5 19h13v13H5z" fill={D} /><path d="M6 20h11v11H6z" fill={G} /><path d="M15 17h6v5" fill="none" stroke={T} strokeWidth="1.300" /></>,
  },
];

const layouts: Icon[] = [
  {
    name: 'Single Perspective View',
    art: <><path d="M4 4h28v28H4z" fill={G} /><path d="M6.500 6.500h23v23h-23z" fill="none" stroke="#2b2b2b" strokeWidth="1.300" /><path d="M18 11l4 3-4 3-4-3zM18 19l4 3-4 3-4-3zM13 15l4 3-4 3-4-3zM23 15l4 3-4 3-4-3z" fill="#333" /></>,
  },
  {
    name: 'Four View',
    art: <><path d="M4.500 4.500h12v12h-12zM4.500 19.500h12v12h-12zM19.500 19.500h12v12h-12z" fill="none" stroke={G} /><path d="M19 4h13v13H19z" fill={G} /><path d="M10.500 7v7M7 10.500h7M10.500 22v7M7 25.500h7M25.500 22v7M22 25.500h7" stroke={G} /><path d="M25.500 7l5 3.500-5 3.500-5-3.500z" fill="#333" /></>,
  },
  {
    name: 'Two Panes Side by Side',
    art: <><path d="M4.500 4.500h12v27h-12z" fill="none" stroke={G} /><path d="M19 4h13v28H19z" fill={G} /><path d="M10.500 14v7M7 17.500h7" stroke={G} /><path d="M25.500 14l5 3.500-5 3.500-5-3.500z" fill="#333" /></>,
  },
  {
    name: 'Outliner View',
    on: true,
    art: (
      <>
        <path d="M4.500 4.500h27v27h-27zM7.500 7.500h21v21h-21z" fill="none" stroke={G} />
        <path d="M10.500 11v16M10 15h6M10 21h6M10 27h6" stroke="#2b2b2b" />
        <path d="M13 9.500h11M19 14.500h9M19 20.500h6M19 26.500h7" stroke="#2b2b2b" strokeWidth="3" />
        <path d="M13 9.500h10M19 14.500h8M19 20.500h5M19 26.500h6" stroke={G} />
        <path d="M8.500 7.500h4v4h-4zM14.500 12.500h4v4h-4zM14.500 18.500h4v4h-4zM14.500 24.500h4v4h-4z" fill={G} stroke="#2b2b2b" />
      </>
    ),
  },
];

const ToolButton = ({ icon }: { icon: Icon }) => (
  <button aria-label={icon.name} className={clsx('size-9', icon.on && 'bg-[#5285a6]')}>
    <Svg box={36} className="size-9">{icon.art}</Svg>
  </button>
);

const ToolBox = () => (
  <aside className="flex w-[46px] shrink-0 flex-col border-r-2 border-[#373737] pl-1" aria-label="Tool box">
    <div className="mb-1 h-[6px] w-9 bg-[radial-gradient(#808080_30%,transparent_40%)] bg-size-[3px_3px]" />
    <div className="flex flex-col gap-px">
      {tools.map((icon) => <ToolButton key={icon.name} icon={icon} />)}
    </div>
    <div className="mt-[78px] mb-[5px] h-[2px] w-9 bg-[#9a9a9a]" />
    <div className="flex flex-col gap-px">
      {layouts.map((icon) => <ToolButton key={icon.name} icon={icon} />)}
    </div>
    <svg viewBox="0 0 32 32" className="mt-auto mb-[6px] ml-[2px] size-8" aria-label="Maya">
      <path d="M0 1h8l8 13v14L8 17v14H0z" fill="#1b9a9d" />
      <path d="M32 1h-7L14 22l4 6 7-11v14h7z" fill="#12a9a8" />
      <path d="M0 1h10l8 25q-4 2-7-4z" fill="#8fcbd0" />
      <path d="M0 31h7V14L0 1z" fill="#2fa3a8" />
      <path d="M25 31l7-12V1l-7 8z" fill="#0b8688" />
    </svg>
  </aside>
);

const cameras = ['persp', 'top', 'front', 'side'];
const sets = ['defaultLightSet', 'defaultObjectSet'];

const Outliner = () => (
  <aside className="flex w-[266px] shrink-0 flex-col border-r-2 border-[#373737]" aria-label="Outliner">
    <div className="flex h-4 shrink-0 items-end bg-[#373737] pl-[2px]">
      <button className="h-4 bg-[#444] px-[10px] leading-[18px] text-[#eeeeee]">Outliner</button>
    </div>
    <MenuBar items={['Display', 'Show', 'Help']} className="h-[22px] shrink-0 gap-[15px] pl-[11px]" />
    <div className="flex h-[25px] shrink-0 items-center pt-[2px] pr-[5px] pl-2">
      <button aria-label="Filter" className="size-4">
        <Svg box={16} className="size-4">
          <path d="M3.500 3.500h9v9h-9z" fill="none" stroke="#6a6a6a" />
          <path d="M1 0l4 2-4 3zM15 0l-4 2 4 3zM1 16l4-2-4-3zM15 16l-4-2 4-3z" fill="#6a6a6a" />
        </Svg>
      </button>
      <div className="relative ml-[7px] flex-1">
        <input aria-label="Search" placeholder="Search..." className="block h-[18px] w-full rounded-[2px] bg-[#2b2b2b] px-[3px] text-[11px] outline-none placeholder:text-[#868686]" />
        <svg viewBox="0 0 10 5" className="pointer-events-none absolute top-[7px] right-1 h-[5px] w-[10px]"><path d="M0 0h10L5 5z" fill={G} /></svg>
      </div>
    </div>
    <div className="mr-1 ml-1 flex flex-1 flex-col bg-[#373737]">
      <div className="flex flex-1">
        <ul className="flex-1">
          {cameras.map((cam) => (
            <li key={cam} className="flex h-5 items-center pl-[35px] text-[#686868]">
              <Svg box={16} className="mr-[3px] size-4"><Cam /></Svg>
              {cam}
            </li>
          ))}
          {sets.map((set) => (
            <li key={set} className="flex h-5 items-center pl-[35px]">
              <Svg box={16} className="mr-[3px] size-4">
                <circle cx="8" cy="8" r="7.300" fill="none" stroke={G} strokeWidth="1.200" />
                <path d="M7 4h5v8h-2V7H7z" fill={T} />
                <circle cx="6" cy="10" r="3" fill={G} />
              </Svg>
              {set}
            </li>
          ))}
        </ul>
        <div className="flex w-[10px] flex-col items-center gap-[2px] pb-[2px]">
          <Arrow dir="up" />
          <div className="w-full flex-1 rounded-[4px] bg-[#5d5d5d]" />
          <Arrow dir="down" />
        </div>
      </div>
      <div className="flex h-[12px] shrink-0 items-center gap-[3px] pr-[13px]">
        <Arrow dir="left" />
        <div className="h-[10px] flex-1 rounded-[4px] bg-[#5d5d5d]" />
        <Arrow dir="right" />
      </div>
    </div>
    <div className="flex h-[10px] shrink-0 justify-center">
      <DotHandle />
    </div>
  </aside>
);

// Perspective projection of the 20 x 20 ground plane, seen corner-on.
const project = (u: number, v: number) => {
  const p = (u - v) / 20;
  const q = (u + v) / 20;
  const w = 1 - 0.3362 * q;
  return `${(657.5 + (484.3 * p) / w).toFixed(2)} ${(410.5 + (226.5 * q) / w).toFixed(2)}`;
};
const steps = Array.from({ length: 21 }, (_, i) => i - 10);
const gridPath = steps
  .filter((i) => i !== 0)
  .map((i) => `M${project(i, -10)}L${project(i, 10)}M${project(-10, i)}L${project(10, i)}`)
  .join('');
const axisPath = `M${project(0, -10)}L${project(0, 10)}M${project(-10, 0)}L${project(10, 0)}`;

const Viewport = () => (
  <main className="flex min-w-0 flex-1 flex-col px-[3px] pt-px pb-[3px]">
    <div className="flex flex-1 flex-col border border-[#858585]">
      <MenuBar items={['View', 'Shading', 'Lighting', 'Show', 'Renderer', 'Panels']} className="h-[18px] shrink-0 gap-[15px] pl-2" />
      <div className="flex h-5 shrink-0 items-center">
        {panelGroups.map((group, i) => (
          <div key={i} className="flex items-center">
            <Sep className="h-[18px] w-[11px]" />
            {group.map((icon) => (
              <button
                key={icon.name}
                aria-label={icon.name}
                className={clsx('flex h-[18px] w-[19px] items-center justify-center', icon.on && 'bg-[#5285a6]')}
              >
                <Svg box={16} className="size-4">{icon.art}</Svg>
              </button>
            ))}
          </div>
        ))}
        <Sep className="h-[18px] w-[11px]" />
        <button aria-label="Exposure" className="flex w-[22px] justify-center">
          <Svg box={16} className="size-[14px]">
            <circle cx="8" cy="8" r="4.500" fill="none" stroke={G} strokeWidth="5" />
            <path d="M8 1l3 5M15 7l-5 2M12 14l-4-4M4 14l2-5M1 7l5-1" stroke={D} strokeWidth="1.300" />
          </Svg>
        </button>
        <Field label="Exposure value" value="0.00" className="h-[14px] w-[38px]" />
        <button aria-label="Gamma" className="flex w-[23px] justify-center">
          <Svg box={16} className="size-[14px]">
            <path d="M7 4a4 4 0 0 0 0 8z" fill={G} />
            <path d="M8 1h6v14H8v-2a5 5 0 0 0 0-10z" fill={G} />
          </Svg>
        </button>
        <Field label="Gamma value" value="1.00" className="h-[14px] w-[38px]" />
        <button aria-label="Color management" className="mr-[3px] ml-[2px] flex size-[18px] items-center justify-center bg-[#5285a6]">
          <Svg box={16} className="size-4">
            <circle cx="8" cy="8" r="6.500" fill={T} stroke="#2f5060" />
            <text x="8" y="10" textAnchor="middle" fontFamily="Roboto, sans-serif" fontWeight="700" fontSize="6" fill="#2f4f5a">ON</text>
          </Svg>
        </button>
        <Combo label="View transform" value="ACES 1.0 SDR-video (sRGB)" className="h-[17px] w-[198px]" />
      </div>
      <div className="relative flex-1 bg-[#5d5d5d]">
        <svg viewBox="0 0 1315 822" className="absolute inset-0 h-full w-full" aria-label="Perspective grid">
          <path d={gridPath} fill="none" stroke="#404040" />
          <path d={axisPath} fill="none" stroke="#404040" strokeWidth="1.800" />
        </svg>
        <svg viewBox="0 0 36 32" className="absolute bottom-[19px] left-2 h-8 w-9" aria-label="Axes">
          <path d="M17 24V11" stroke="#00ff00" />
          <path d="M17 24l8 4" stroke="#ff0000" strokeWidth="1.500" />
          <path d="M17 24l-8 4" stroke="#0000ff" strokeWidth="1.500" />
          <g fontFamily="Liberation Sans, sans-serif" fontWeight="700" fontSize="9">
            <text x="15" y="8" fill="#00ff00">y</text>
            <text x="25" y="29" fill="#ff0000">x</text>
            <text x="4" y="29" fill="#0000ff">z</text>
          </g>
        </svg>
        <span className="absolute bottom-[5px] left-1/2 -ml-[22px] text-[10px] leading-4 font-bold text-white">persp</span>
      </div>
    </div>
  </main>
);

const layerIcons: Icon[] = [
  { name: 'Move layer up', art: <><path d="M0 9l8-5v10z" fill={G} /><path d="M12 3l4 4h-2v6h-4V7H8z" fill={T} stroke={D} strokeWidth="0.500" /></> },
  { name: 'Move layer down', art: <><path d="M0 9l8-5v10z" fill={G} /><path d="M12 14l4-4h-2V4h-4v6H8z" fill={T} stroke={D} strokeWidth="0.500" /></> },
  { name: 'Create empty layer', art: <><path d="M0 9l7-5 6 5-6 5z" fill={G} /><path d="M12 1v7M8.500 4.500h7" stroke={T} strokeWidth="2.500" /></> },
  { name: 'Create layer from selected', art: <><path d="M0 9l7-5 6 5-6 5z" fill={G} /><circle cx="11" cy="5" r="3.500" fill={T} /></> },
];

const ChannelBox = () => (
  <aside className="flex w-[269px] shrink-0 flex-col border-l-2 border-[#373737] pr-[3px] pl-1" aria-label="Channel Box / Layer Editor">
    <div className="flex h-[21px] shrink-0 items-start justify-end gap-[5px] pt-px pr-[2px]">
      <button aria-label="Manipulators">
        <Svg box={16} className="size-4">
          <path d="M8 0l3 5H5z" fill="#6fae3a" />
          <path d="M1 9l6 6H1z" fill="#3f77e0" />
          <path d="M15 9l-6 6h6z" fill="#d9474b" />
          <path d="M8 5v5M8 9l-4 3M8 9l4 3" stroke={G} strokeWidth="2" />
        </Svg>
      </button>
      <button aria-label="Speed">
        <Svg box={16} className="size-4">
          <path d="M3 13a6 6 0 1 1 10-1" fill="none" stroke={T} strokeWidth="4" />
          <path d="M7 8h4M11 13l3-2" stroke="#8a8a8a" strokeWidth="3" />
        </Svg>
      </button>
      <button aria-label="Hyperbolic">
        <Svg box={16} className="size-4">
          <path d="M2 1v13h13" fill="none" stroke="#9a9a9a" />
          <path d="M4 12L12 4" stroke={T} strokeWidth="1.600" />
          <path d="M15 1v5l-5-5z" fill={T} />
        </Svg>
      </button>
    </div>
    <MenuBar items={['Channels', 'Edit', 'Object', 'Show']} className="mb-px h-5 shrink-0 gap-[15px] pl-2" />
    <div className="mr-px ml-px basis-0 grow-[429] bg-[#2b2b2b]" />
    <div className="flex h-3 shrink-0 justify-center pt-[2px]"><DotHandle /></div>
    <div className="mb-1 flex grow-[378] basis-0 flex-col border border-[#333]">
      <div className="flex h-[17px] shrink-0 items-end gap-[2px] bg-[#373737]">
        <button className="h-4 bg-[#444] px-[11px] leading-4 text-[#eeeeee]">Display</button>
        <button className="h-4 rounded-t-[2px] border border-b-0 border-[#2e2e2e] px-[10px] leading-4 text-[#868686]">Anim</button>
      </div>
      <MenuBar items={['Layers', 'Options', 'Help']} className="h-[22px] shrink-0 gap-[15px] pl-[9px]" />
      <div className="flex h-[25px] shrink-0 items-start justify-end gap-2 pt-[2px] pr-[9px]">
        {layerIcons.map((icon) => (
          <button key={icon.name} aria-label={icon.name}>
            <Svg box={16} className="size-4">{icon.art}</Svg>
          </button>
        ))}
      </div>
      <div className="mr-1 ml-[3px] flex-1 bg-[#2b2b2b]" />
      <div className="mr-1 mb-[3px] ml-[3px] flex h-3 shrink-0 items-center justify-between bg-[#373737] px-[1px]">
        <Arrow dir="left" />
        <div className="mx-[3px] flex-1">
          <div className="h-[10px] w-[70%] rounded-[4px] bg-[#5d5d5d]" />
        </div>
        <Arrow dir="right" />
      </div>
    </div>
  </aside>
);

const sideTabs = [
  { label: 'Channel Box / Layer Editor', className: 'h-[156px] bg-[#444] text-[#dddddd]' },
  { label: 'Modeling Toolkit', className: 'h-[110px] border border-l-0 border-[#2e2e2e] text-[#8a8a8a]' },
  { label: 'Attribute Editor', className: 'h-[101px] border border-l-0 border-[#2e2e2e] text-[#8a8a8a]' },
];

const SideTabs = () => (
  <div className="flex w-4 shrink-0 flex-col gap-[2px] bg-[#373737]">
    {sideTabs.map((tab) => (
      <button key={tab.label} className={clsx('flex items-center justify-center pr-[2px] leading-[14px] whitespace-nowrap [writing-mode:vertical-rl]', tab.className)}>
        {tab.label}
      </button>
    ))}
  </div>
);

const frames = Array.from({ length: 24 }, (_, i) => (i + 1) * 5);

const playback: Icon[] = [
  { name: 'Go to start', art: <><path d="M2 3v14" stroke={G} strokeWidth="2" /><path d="M11 3v14l-7-7zM19 3v14l-7-7z" fill={G} /></> },
  { name: 'Step back frame', art: <><path d="M4 3v14" stroke={G} strokeWidth="2" /><path d="M16 3v14l-9-7z" fill={G} /></> },
  { name: 'Step back key', art: <><path d="M5 0v20" stroke={G} /><path d="M5 3v14" stroke="#e07f3c" strokeWidth="3" /><path d="M17 3v14l-9-7z" fill={G} /></> },
  { name: 'Play backwards', art: <path d="M16 2v16L3 10z" fill={G} /> },
  { name: 'Play forwards', art: <path d="M4 2v16l13-8z" fill={G} /> },
  { name: 'Step forward key', art: <><path d="M15 0v20" stroke={G} /><path d="M15 3v14" stroke="#e07f3c" strokeWidth="3" /><path d="M3 3v14l9-7z" fill={G} /></> },
  { name: 'Step forward frame', art: <><path d="M16 3v14" stroke={G} strokeWidth="2" /><path d="M4 3v14l9-7z" fill={G} /></> },
  { name: 'Go to end', art: <><path d="M18 3v14" stroke={G} strokeWidth="2" /><path d="M1 3v14l7-7zM9 3v14l7-7z" fill={G} /></> },
];

const TimeSlider = () => (
  <section className="flex h-[46px] shrink-0 border-t-2 border-[#373737]" aria-label="Time slider">
    <Grip />
    <div className="relative mt-1 mb-1 ml-[5px] flex min-w-0 flex-1 border-b-[3px] border-[#373737] bg-[#2b2b2b]">
      <div className="grow-[61] basis-0" />
      {frames.map((frame) => (
        <div key={frame} className={clsx('flex min-w-0 basis-0 flex-col text-[#787878]', frame === 120 ? 'grow-[21]' : 'grow-[66]')}>
          <span className="h-[13px] pl-[2px] leading-[10px]">{frame}</span>
          <span className="h-[19px] w-[2px] bg-[#808080]" />
        </div>
      ))}
      <div className="absolute inset-y-0 left-[9px] flex w-[11px] items-end bg-[#5d5d5d] pl-[2px] leading-[18px] text-white">1</div>
    </div>
    <div className="flex shrink-0 items-start pt-[7px] pr-[10px] pl-[7px]">
      <Field label="Current frame" value="1" className="mt-px h-[18px] w-[88px]" />
      <div className="ml-[7px] flex">
        {playback.map((icon) => <IconButton key={icon.name} icon={icon} />)}
      </div>
    </div>
  </section>
);

const DropHint = ({ label }: { label: string }) => (
  <button aria-label={label} className="flex w-[25px] justify-center pb-1">
    <svg viewBox="0 0 10 6" className="h-[6px] w-[10px]"><path d="M1 .5h8L5 5z" fill="none" stroke="#8f8f8f" /></svg>
  </button>
);

const RangeSlider = () => (
  <section className="flex h-[37px] shrink-0 border-t-2 border-[#373737]" aria-label="Range slider">
    <Grip />
    <div className="flex min-w-0 flex-1 items-center pr-[9px] pl-[6px]">
      <Field label="Animation start" value="1" className="h-[25px] w-[88px] shrink-0" />
      <Field label="Playback start" value="1" className="ml-2 h-[25px] w-[88px] shrink-0" />
      <div className="mr-[7px] ml-[7px] flex h-[25px] min-w-0 flex-1 items-center bg-[#373737] px-[5px]">
        <div className="flex h-5 w-[61%] items-center justify-between rounded-[3px] bg-[#5d5d5d] px-[3px]">
          <span className="flex items-center gap-1">
            <button aria-label="Playback range start" className="size-[15px] rounded-[4px] bg-[#939393]" />1
          </span>
          <span className="flex items-center gap-[3px]">
            120<button aria-label="Playback range end" className="size-[15px] rounded-[4px] bg-[#939393]" />
          </span>
        </div>
      </div>
      <Field label="Playback end" value="120" className="h-[25px] w-[88px] shrink-0" />
      <Field label="Animation end" value="200" className="ml-2 h-[25px] w-[88px] shrink-0" />
      <Sep className="h-5 w-[10px]" />
      <button aria-label="Add bookmark" className="flex w-[34px] justify-center">
        <Svg box={20} className="size-5">
          <path d="M5 2h8v16l-4-5-4 5z" fill="#e8703a" />
          <path d="M13 0v9M9 4h9" stroke={D} strokeWidth="4.500" />
          <path d="M14 0v8M10 4h8" stroke={G} strokeWidth="2.200" />
        </Svg>
      </button>
      <Sep className="h-5 w-[10px]" />
      <span className="w-[2px]" />
      <DropHint label="Character set options" />
      <button className="h-[25px] w-[102px] shrink-0 rounded-[3px] border-2 border-[#4d4d4d] bg-[#404040] pl-[3px] text-left whitespace-nowrap">
        No Character Set
      </button>
      <span className="w-[2px]" />
      <DropHint label="Anim layer options" />
      <button className="h-[25px] w-[102px] shrink-0 rounded-[3px] border-2 border-[#4d4d4d] bg-[#404040] pl-[3px] text-left whitespace-nowrap">
        No Anim Layer
      </button>
      <Sep className="h-5 w-[23px]" />
      <Combo label="Frame rate" value="24 fps" className="h-5 w-[95px]" />
      <div className="ml-[10px] flex items-center gap-[7px]">
        <IconButton
          icon={{
            name: 'Loop',
            art: <><path d="M3 11V7q0-2 2-2h9M17 8v4q0 2-2 2H6" fill="none" stroke={G} strokeWidth="2.200" /><path d="M13 1l5 4-5 4zM7 10l-5 4 5 4z" fill={G} /></>,
          }}
        />
        <IconButton
          icon={{
            name: 'Cached Playback',
            on: true,
            art: (
              <>
                <path d="M1 3h18v15H1z" fill="#e8803a" />
                <path d="M2 8h16v5H2z" fill="#2b2b2b" />
                <path d="M3 5.500h14M3 15.500h14" stroke="#2b2b2b" strokeWidth="2" strokeDasharray="2 1" />
                <path d="M3 8h4v5H3zM8 8h4v5H8zM13 8h4v5h-4z" fill={G} />
                <path d="M13 0l6 5-6 4z" fill={G} stroke="#5285a6" strokeWidth="0.700" />
              </>
            ),
          }}
        />
      </div>
      <Sep className="h-5 w-[20px]" />
      <div className="flex gap-[6px]">
        <IconButton
          icon={{
            name: 'Mute audio',
            art: <><path d="M1 7h4l6-5v16l-6-5H1z" fill={G} /><path d="M13 7q2 3 0 6M16 5q3 5 0 10" fill="none" stroke={G} strokeWidth="1.500" /></>,
          }}
        />
        <IconButton
          icon={{
            name: 'Auto keyframe',
            art: <><path d="M3 8a7.500 7.500 0 0 1 13-3M17 12a7.500 7.500 0 0 1-13 3M16 1v4h-4M4 19v-4h4M2 10h3M15 10h3" fill="none" stroke={G} strokeWidth="1.500" /><path d="M10 5v10" stroke="#e8803a" strokeWidth="2" /></>,
          }}
        />
        <IconButton
          icon={{
            name: 'Animation preferences',
            art: <>{gear(5, 5, G, 3)}<circle cx="15" cy="5" r="2" fill="#e8803a" /><path d="M8 9l5-2 2 3 3 1M12 8l-2 5 4 2-1 4M10 13l-1 3-5 1" fill="none" stroke="#e8803a" strokeWidth="2.200" /></>,
          }}
        />
      </div>
    </div>
  </section>
);

const CommandLine = () => (
  <section className="flex h-[34px] shrink-0 border-t-2 border-[#373737]" aria-label="Command line">
    <Grip />
    <div className="flex min-w-0 flex-1 items-center pr-2">
      <button className="w-[51px] pl-4 text-left text-[#eeeeee]">MEL</button>
      <Field label="Command" className="h-[22px] grow-[742] basis-0" />
      <div className="mx-[3px] h-4 w-[2px] bg-[radial-gradient(#808080_30%,transparent_40%)] bg-size-[3px_3px]" />
      <output className="flex h-6 min-w-0 grow-[1078] basis-0 items-center bg-[#2b2b2b] px-[6px]">// Result: untitled</output>
      <button aria-label="Script editor" className="ml-[6px]">
        <Svg box={20} className="size-5">
          <path d="M1 1h18v3H1zM1 5h18v14H1z" fill={G} />
          <path d="M2 2.500h1M4 2.500h1M6 2.500h1" stroke={D} />
          <text x="10" y="15" textAnchor="middle" fontFamily="Liberation Mono, monospace" fontWeight="700" fontSize="9" fill="#333">{'{;}'}</text>
        </Svg>
      </button>
    </div>
  </section>
);

const App = () => (
  <div className="flex min-h-screen flex-col bg-[#444444] font-['Noto_Sans',sans-serif] text-[11px] text-[#cfcfcf]">
    <TitleBar />
    <MainMenu />
    <StatusLine />
    <Shelf />
    <div className="flex min-h-[640px] flex-1 border-t-2 border-[#373737] pt-[2px]">
      <ToolBox />
      <Outliner />
      <Viewport />
      <ChannelBox />
      <SideTabs />
    </div>
    <TimeSlider />
    <RangeSlider />
    <CommandLine />
    <footer className="flex h-[26px] shrink-0 border-t-2 border-[#373737]">
      <Grip />
      <p className="pl-4 font-['Roboto',sans-serif] text-[10px] leading-6">Select Tool: select an object</p>
    </footer>
  </div>
);

export default App;
